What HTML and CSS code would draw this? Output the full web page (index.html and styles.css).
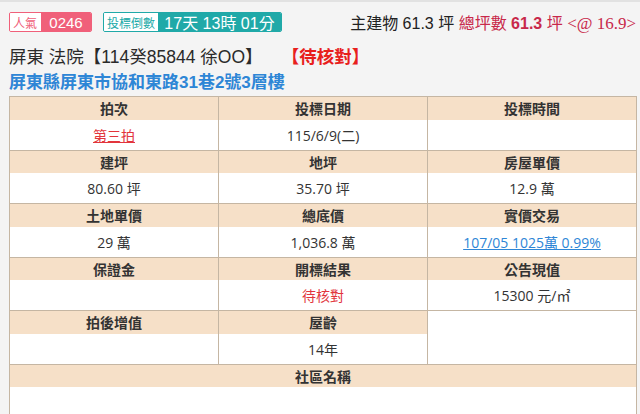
FILE: index.html
```html
<!DOCTYPE html>
<html lang="zh-Hant">
<head>
<meta charset="utf-8">
<link rel="stylesheet" href="styles.css">
</head>
<body>
<div class="page">
  <div class="top">
    <div class="badges">
      <span class="badge pink"><span class="lbl">人氣</span><span class="val">0246</span></span>
      <span class="badge teal"><span class="lbl">投標倒數</span><span class="val">17天 13時 01分</span></span>
    </div>
    <div class="area">主建物 61.3 坪 <span class="hl">總坪數 <b>61.3</b> 坪 <span class="at">&lt;@ 16.9&gt;</span></span></div>
  </div>
  <div class="title">屏東 法院【114癸85844 徐OO】<span class="status">【待核對】</span></div>
  <div class="addr">屏東縣屏東市協和東路31巷2號3層樓</div>
  <table class="info">
    <tr class="h"><th>拍次</th><th>投標日期</th><th>投標時間</th></tr>
    <tr class="d"><td><a class="red">第三拍</a></td><td>115/6/9(二)</td><td></td></tr>
    <tr class="h"><th>建坪</th><th>地坪</th><th>房屋單價</th></tr>
    <tr class="d"><td>80.60 坪</td><td>35.70 坪</td><td>12.9 萬</td></tr>
    <tr class="h"><th>土地單價</th><th>總底價</th><th>實價交易</th></tr>
    <tr class="d"><td>29 萬</td><td>1,036.8 萬</td><td><a class="blue">107/05 1025萬 0.99%</a></td></tr>
    <tr class="h"><th>保證金</th><th>開標結果</th><th>公告現值</th></tr>
    <tr class="d"><td></td><td><span class="redt">待核對</span></td><td>15300 元/㎡</td></tr>
    <tr class="h"><th>拍後增值</th><th>屋齡</th><td class="blank" rowspan="2"></td></tr>
    <tr class="d"><td></td><td>14年</td></tr>
    <tr class="h"><th colspan="3">社區名稱</th></tr>
    <tr class="d"><td colspan="3"></td></tr>
  </table>
</div>
</body>
</html>
```
FILE: styles.css
```css
html, body {
  margin: 0;
  padding: 0;
  background: #f4f4f4;
}
body {
  border-top: 2px solid #e2e2e2;
  font-family: "Liberation Sans", "Noto Sans CJK TC", sans-serif;
  color: #333;
}
.page {
  padding: 10px 3px 0 9px;
}
.top {
  display: flex;
  justify-content: space-between;
  align-items: center;
  height: 20px;
}
.badges {
  display: flex;
  gap: 11px;
}
.badge {
  display: flex;
  height: 20px;
  box-sizing: border-box;
  border-radius: 2px;
  overflow: hidden;
}
.badge .lbl {
  background: #fff;
  font-size: 12px;
  padding: 0 3px;
  display: flex;
  align-items: center;
}
.badge .val {
  color: #fff;
  display: flex;
  align-items: center;
}
.pink { border: 1px solid #f0607a; }
.pink .lbl { color: #f0607a; width: 25px; }
.pink .val { background: #f0607a; font-size: 15px; width: 50px; justify-content: center; }
.teal { border: 1px solid #20a9a8; }
.teal .lbl { color: #20a9a8; width: 48px; font-size: 12px; }
.teal .val { background: #20a9a8; font-size: 16px; width: 123px; justify-content: center; }
.area {
  font-size: 16px;
  color: #222;
  padding-right: 1px;
}
.area .hl { color: #c8284a; }
.area .at { font-family: "Liberation Serif", "Noto Sans CJK TC", serif; font-size: 17px; }
.title {
  margin-top: 13px;
  font-size: 17.5px;
  line-height: 25px;
  color: #2a2a2a;
}
.status {
  color: #e8201c;
  font-weight: bold;
  margin-left: 28px;
}
.addr {
  font-size: 17px;
  line-height: 25px;
  font-weight: bold;
  color: #2e86d6;
  margin-bottom: 1px;
}
.info {
  width: 628px;
  table-layout: fixed;
  border-collapse: collapse;
  border: 1px solid #c5b6a3;
  border-bottom: none;
  background: #fff;
  font-family: "Open Sans", "Noto Sans CJK TC", sans-serif;
  font-size: 14px;
  color: #333;
}
.info th, .info td {
  border-left: 1px solid #c5b6a3;
  border-right: 1px solid #c5b6a3;
  text-align: center;
  padding: 0;
}
.info tr.h th, .info tr.h td {
  border-top: 1px solid #c5b6a3;
}
.info tr.h th {
  background: #f6e0c8;
  height: 22.5px;
  font-weight: bold;
}
.info tr.d td {
  height: 30px;
}
.info td.blank {
  background: #fff;
}
.red {
  color: #e2353c;
  text-decoration: underline;
}
.redt { color: #e2353c; }
.blue {
  color: #2e86d6;
  text-decoration: underline;
}
```
